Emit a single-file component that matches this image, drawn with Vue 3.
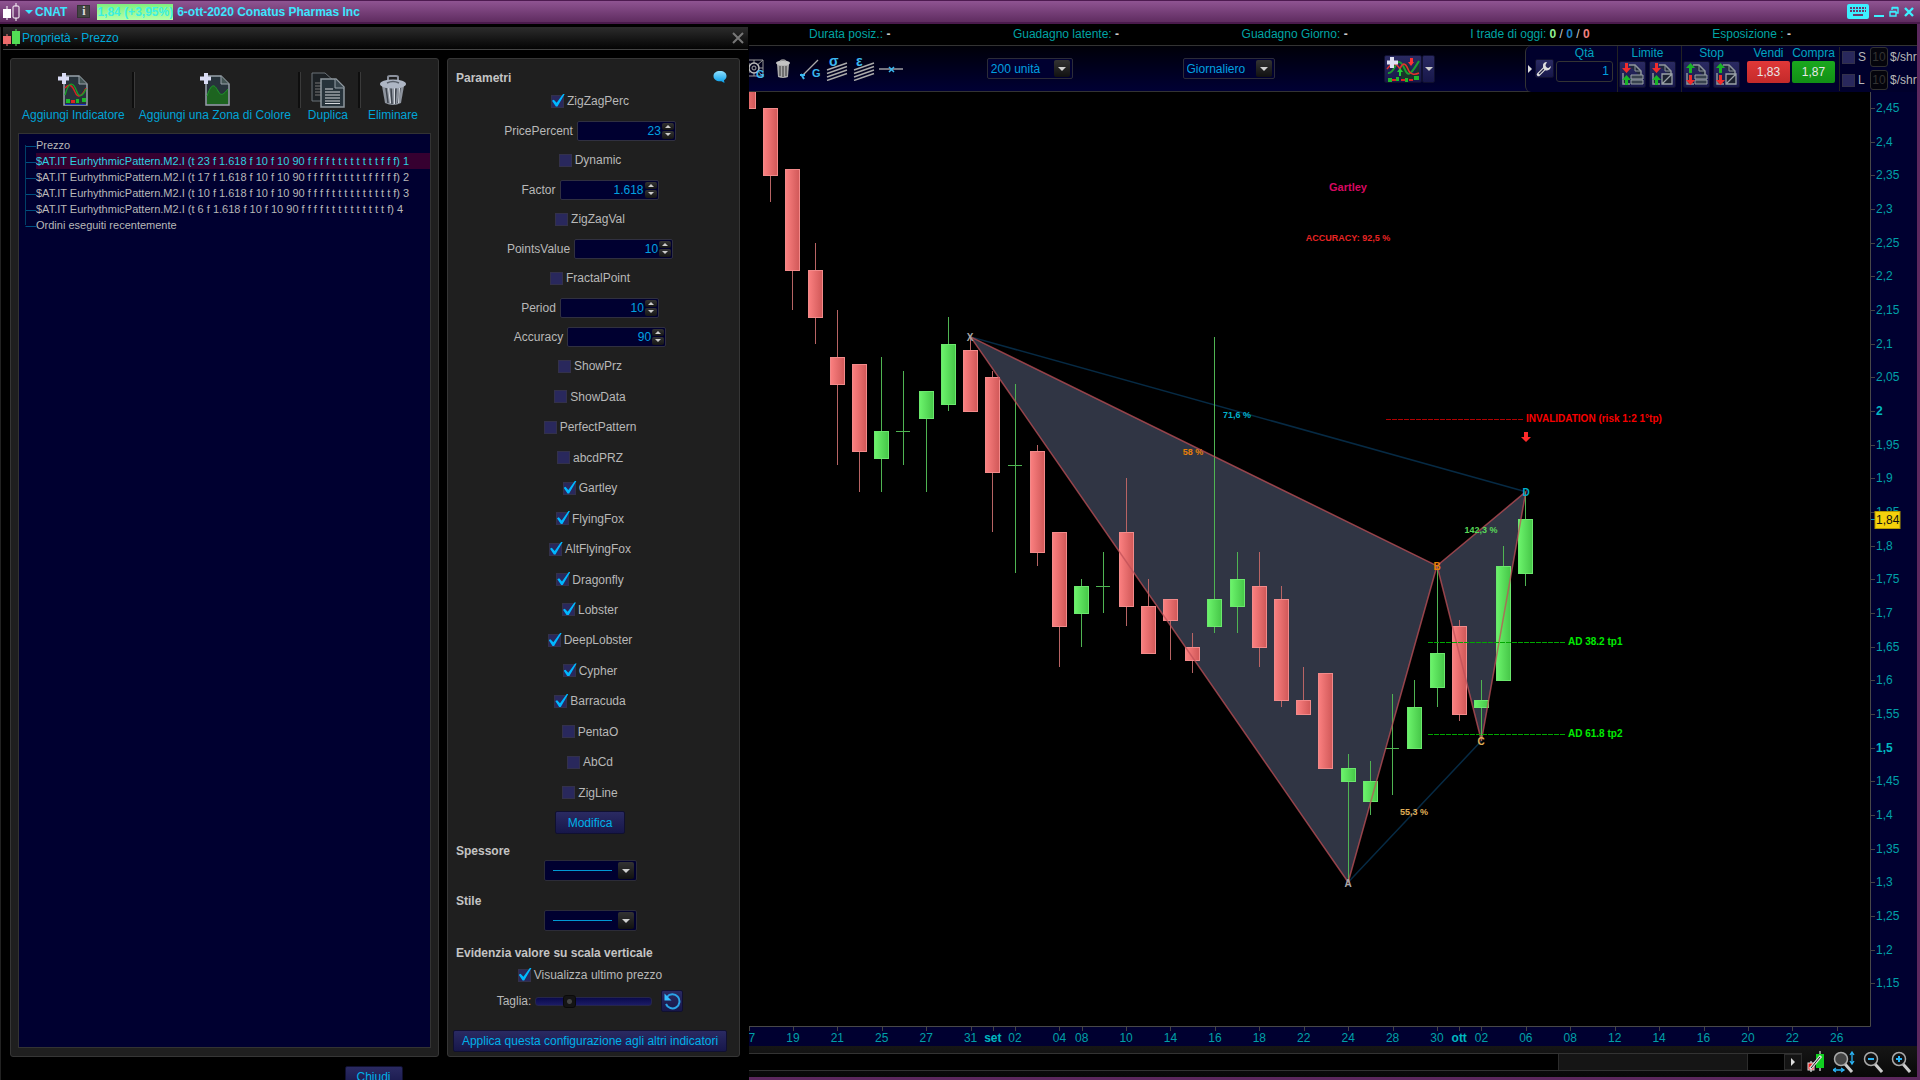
<script setup>
import { ref } from 'vue'

const tree = [
  'Prezzo',
  '$AT.IT EurhythmicPattern.M2.I (t 23 f 1.618 f 10 f 10 90 f f f f t t t t t t t t f f f) 1',
  '$AT.IT EurhythmicPattern.M2.I (t 17 f 1.618 f 10 f 10 90 f f f f t t t t t t f f f f f) 2',
  '$AT.IT EurhythmicPattern.M2.I (t 10 f 1.618 f 10 f 10 90 f f f f t t t t t t t t t t f) 3',
  '$AT.IT EurhythmicPattern.M2.I (t 6 f 1.618 f 10 f 10 90 f f f f t t t t t t t t t t f) 4',
  'Ordini eseguiti recentemente',
]
const selected = ref(1)

const params = ref([
  { name: 'ZigZagPerc', on: true },
  { name: 'PricePercent', value: '23' },
  { name: 'Dynamic', on: false },
  { name: 'Factor', value: '1.618' },
  { name: 'ZigZagVal', on: false },
  { name: 'PointsValue', value: '10' },
  { name: 'FractalPoint', on: false },
  { name: 'Period', value: '10' },
  { name: 'Accuracy', value: '90' },
])
const patterns = ref([
  ['ShowPrz', false], ['ShowData', false], ['PerfectPattern', false], ['abcdPRZ', false],
  ['Gartley', true], ['FlyingFox', true], ['AltFlyingFox', true], ['Dragonfly', true],
  ['Lobster', true], ['DeepLobster', true], ['Cypher', true], ['Barracuda', true],
  ['PentaO', false], ['AbCd', false], ['ZigLine', false],
].map(([name, on]) => ({ name, on })))
const showLast = ref(true)
const size = ref(26)

// open, high, low, close
const ohlc = [
  [2.5, 2.5, 2.36, 2.45], [2.45, 2.45, 2.31, 2.35], [2.36, 2.36, 2.15, 2.21], [2.21, 2.25, 2.1, 2.14],
  [2.08, 2.15, 1.92, 2.04], [2.07, 2.07, 1.88, 1.94], [1.93, 2.08, 1.88, 1.97], [1.97, 2.06, 1.92, 1.97],
  [1.99, 2.03, 1.88, 2.03], [2.01, 2.14, 2, 2.1], [2.09, 2.11, 2, 2], [2.05, 2.06, 1.82, 1.91],
  [1.92, 2.04, 1.76, 1.92], [1.94, 1.95, 1.77, 1.79], [1.82, 1.82, 1.62, 1.68], [1.7, 1.75, 1.65, 1.74],
  [1.74, 1.79, 1.7, 1.74], [1.82, 1.9, 1.68, 1.71], [1.71, 1.75, 1.64, 1.64], [1.72, 1.72, 1.63, 1.69],
  [1.65, 1.67, 1.61, 1.63], [1.68, 2.11, 1.67, 1.72], [1.71, 1.79, 1.67, 1.75], [1.74, 1.79, 1.62, 1.65],
  [1.72, 1.74, 1.56, 1.57], [1.57, 1.62, 1.55, 1.55], [1.61, 1.61, 1.47, 1.47], [1.45, 1.49, 1.3, 1.47],
  [1.42, 1.48, 1.4, 1.45], [1.5, 1.58, 1.43, 1.5], [1.5, 1.6, 1.5, 1.56], [1.59, 1.77, 1.56, 1.64],
  [1.68, 1.69, 1.54, 1.55], [1.56, 1.6, 1.51, 1.57], [1.6, 1.8, 1.6, 1.77], [1.76, 1.88, 1.74, 1.84],
]
const px = (i) => 22.21 * i - 0.5
const py = (p) => 16 + (2.45 - p) * 673.2
const candles = ohlc.map(([o, h, l, c], i) => ({
  x: Math.floor(px(i)),
  top: Math.round(py(Math.max(o, c))),
  bottom: Math.round(py(Math.min(o, c))) + 1,
  high: Math.round(py(h)),
  low: Math.round(py(l)),
  kind: c < o ? 'down' : 'up',
  doji: o === c,
}))
const pt = (i, p) => `${px(i)},${py(p)}`
const X = pt(10, 2.11)
const A = pt(27, 1.3)
const B = pt(31, 1.77)
const C = pt(33, 1.51)
const D = pt(35, 1.88)

const prices = Array.from({ length: 27 }, (_, k) => {
  const v = (245 - 5 * k) / 100
  return { y: py(v), text: String(v).replace('.', ','), strong: v === 2 || v === 1.5 }
})
const dates = [
  [0, '17'], [2, '19'], [4, '21'], [6, '25'], [8, '27'], [10, '31'], [11, 'set'], [12, '02'], [14, '04'],
  [15, '08'], [17, '10'], [19, '14'], [21, '16'], [23, '18'], [25, '22'], [27, '24'], [29, '28'], [31, '30'],
  [32, 'ott'], [33, '02'], [35, '06'], [37, '08'], [39, '12'], [41, '14'], [43, '16'], [45, '20'], [47, '22'], [49, '26'],
].map(([i, text]) => ({ x: px(i), text, strong: isNaN(text) }))
const notes = [
  { x: 599, y: 99, text: 'Gartley', cls: 'pink mid n11' },
  { x: 599, y: 149, text: 'ACCURACY: 92,5 %', cls: 'crimson mid n9' },
  { x: 488, y: 326, text: '71,6 %', cls: 'teal mid n9' },
  { x: 444, y: 363, text: '58 %', cls: 'orange mid n9' },
  { x: 732, y: 441, text: '142,3 %', cls: 'green mid n9' },
  { x: 665, y: 723, text: '55,3 %', cls: 'sand mid n9' },
  { x: 777, y: 330, text: 'INVALIDATION (risk 1:2 1°tp)', cls: 'red n10' },
  { x: 819, y: 553, text: 'AD 38.2 tp1', cls: 'lime n10' },
  { x: 819, y: 645, text: 'AD 61.8 tp2', cls: 'lime n10' },
  { x: 221, y: 249, text: 'X', cls: 'grey mid n10' },
  { x: 599, y: 795, text: 'A', cls: 'grey mid n10' },
  { x: 688, y: 478, text: 'B', cls: 'orange mid n10' },
  { x: 732, y: 653, text: 'C', cls: 'sand mid n10' },
  { x: 777, y: 404, text: 'D', cls: 'teal mid n10' },
]
const orders = [
  { name: 'Limite', first: 'red', second: 'green' },
  { name: 'Stop', first: 'green', second: 'red' },
]
</script>

<template>
  <div class="app">
    <header class="titlebar">
      <svg class="logo" width="18" height="18" viewBox="0 0 18 18">
        <path d="M4 3v14" stroke="#fff" /><rect y="6" width="8" height="9" fill="#fff" />
        <path d="M13 0v3m0 12v3" stroke="#fff" /><rect x="10" y="3" width="6" height="12" rx="1" fill="none" stroke="#fff" />
      </svg>
      <svg width="8" height="4" viewBox="0 0 8 4"><path d="M0 0h8L4 4z" fill="#3ce6ff" /></svg>
      <b class="ticker">CNAT</b>
      <button class="info" aria-label="Informazioni">i</button>
      <b class="quote">1,84 (+3,95%)</b>
      <b class="company">6-ott-2020 Conatus Pharmas Inc</b>
      <div class="winbtns">
        <button aria-label="Tastiera">
          <svg width="22" height="15" viewBox="0 0 22 15">
            <rect width="22" height="15" rx="2" fill="#3cf0ff" />
            <path d="M3 4h16M3 7h16" stroke="#6b3a6d" stroke-width="2" stroke-dasharray="2 1" /><path d="M6 11h10" stroke="#6b3a6d" stroke-width="2" />
          </svg>
        </button>
        <button aria-label="Riduci"><svg width="10" height="12" viewBox="0 0 10 12"><path d="M0 10h10" stroke="#3cf0ff" stroke-width="2" /></svg></button>
        <button aria-label="Ripristina">
          <svg width="10" height="12" viewBox="0 0 10 12"><path d="M3 4V2h6v5H7M3 1.5h6M1 6h6v4H1zM1 5.500h6" fill="none" stroke="#3cf0ff" stroke-width="1.400" /></svg>
        </button>
        <button aria-label="Chiudi finestra"><svg width="10" height="12" viewBox="0 0 10 12"><path d="M1 2l8 8M9 2l-8 8" stroke="#3cf0ff" stroke-width="2.400" /></svg></button>
      </div>
    </header>

    <main class="body">
      <section class="dialog">
        <div class="dlghead">
          <svg width="18" height="18" viewBox="0 0 18 18">
            <path d="M4 5v12" stroke="#f28080" /><rect y="7" width="8" height="8" fill="#ee6b6b" />
            <path d="M13 0v17" stroke="#5fe060" /><rect x="9" y="2" width="8" height="13" fill="#52dd55" />
          </svg>
          <h1>Proprietà - Prezzo</h1>
          <button class="x" aria-label="Chiudi pannello"><svg width="12" height="12" viewBox="0 0 12 12"><path d="M1 1l10 10M11 1L1 11" stroke="#777" stroke-width="2" /></svg></button>
        </div>

        <div class="panels">
          <div class="panel left">
            <div class="tools">
              <button class="tool">
                <svg width="32" height="36" viewBox="0 0 32 36">
                  <path d="M7 4h15l8 8v21H7z" fill="#27333b" stroke="#98a2aa" stroke-width="1.500" /><path d="M22 4v8h8" fill="#455" stroke="#98a2aa" />
                  <path d="M8 16c4-5 7-3 10 4s7 4 11-4" fill="none" stroke="#d22" stroke-width="1.400" /><path d="M8 23c4-14 8-14 12-3 2 6 6 4 9-3" fill="none" stroke="#18a028" stroke-width="1.400" />
                  <path d="M9 29h4m6 0h3m3-1h4" stroke="#1eb82a" stroke-width="4" /><path d="M14 29.500h4" stroke="#d22" stroke-width="3" /><path d="M8 32.500h21" stroke="#1c35c0" />
                  <path d="M7 1v11M1 6.500h11" stroke="#d9dcf4" stroke-width="4" />
                </svg>
                Aggiungi Indicatore
              </button>
              <button class="tool">
                <svg width="32" height="36" viewBox="0 0 32 36">
                  <path d="M7 4h15l8 8v21H7z" fill="#27333b" stroke="#98a2aa" stroke-width="1.500" /><path d="M22 4v8h8" fill="#455" stroke="#98a2aa" />
                  <path d="M8 24c4-12 7-13 11-5 3 6 6 3 10-2v15H8z" fill="#1d6420" /><path d="M8 24c4-12 7-13 11-5 3 6 6 3 10-2" fill="none" stroke="#1f9a2c" />
                  <path d="M7 1v11M1 6.500h11" stroke="#d9dcf4" stroke-width="4" />
                </svg>
                Aggiungi una Zona di Colore
              </button>
              <button class="tool">
                <svg width="34" height="36" viewBox="0 0 34 36">
                  <path d="M1 1h13l9 8v20H1z" fill="#1c2125" stroke="#6b7278" /><path d="M4 11h6M4 14h6M4 17h6M4 20h6M4 23h6" stroke="#777" />
                  <path d="M10 7h15l8 8v20H10z" fill="#27333b" stroke="#8f989f" stroke-width="1.500" /><path d="M24 7v9h9" fill="#37444c" stroke="#98a2aa" />
                  <path d="M14 17h8m-8 3h15m-15 3h15m-15 3h15m-15 3h15m-15 2.500h15" stroke="#d5d8dc" stroke-width="1.200" />
                </svg>
                Duplica
              </button>
              <button class="tool">
                <svg width="30" height="36" viewBox="0 0 30 36">
                  <path d="M10 8V5q0-1 2-1h6q2 0 2 1v3" fill="none" stroke="#8a909c" stroke-width="2" />
                  <path d="M4 14l3 17q8 4 16 0l3-17z" fill="#8d939d" /><path d="M8 16l2 15m3-15l1 16m4-16l-1 16m5-16l-2 15" stroke="#3d434c" stroke-width="1.500" /><path d="M10.500 16l2 15m4-15v16m5-16l-1 15" stroke="#d5d9e0" />
                  <ellipse cx="15" cy="12" rx="13" ry="4.500" fill="#aeb6c4" /><path d="M9 11q6-3 12 0" stroke="#59606b" stroke-width="1.500" fill="none" />
                </svg>
                Eliminare
              </button>
            </div>
            <ul class="tree">
              <li v-for="(t, i) in tree" :key="i" :class="{ sel: i === selected }" @click="selected = i"><span>{{ t }}</span></li>
            </ul>
          </div>

          <div class="panel right">
            <div class="phead">
              <h2>Parametri</h2>
              <svg width="14" height="14" viewBox="0 0 14 14"><defs><linearGradient id="balloon" x2="0" y2="1"><stop stop-color="#8fe0ff" /><stop offset="1" stop-color="#009be8" /></linearGradient></defs><path d="M7 1c4 0 6.500 2 6.500 5 0 2-1 3.400-2.500 4.300l.5 2.700-3-1.800C3.500 11.600.5 9.500.5 6 .5 3 3 1 7 1z" fill="url(#balloon)" /></svg>
            </div>
            <template v-for="p in params" :key="p.name">
              <div v-if="p.value" class="row spinrow">
                <label :for="p.name">{{ p.name }}</label>
                <span class="spin">
                  <input :id="p.name" v-model="p.value" type="text">
                  <span class="steps"><button aria-label="Aumenta"><i class="up"></i></button><button aria-label="Diminuisci"><i class="dn"></i></button></span>
                </span>
              </div>
              <label v-else class="row"><input v-model="p.on" type="checkbox">{{ p.name }}</label>
            </template>
            <div class="grow">
              <label v-for="p in patterns" :key="p.name" class="row"><input v-model="p.on" type="checkbox">{{ p.name }}</label>
            </div>
            <button class="btn modify">Modifica</button>
            <h2><label for="thick">Spessore</label></h2>
            <span class="drop line"><select id="thick"><option></option></select></span>
            <h2><label for="style">Stile</label></h2>
            <span class="drop line"><select id="style"><option></option></select></span>
            <h2 class="last">Evidenzia valore su scala verticale</h2>
            <label class="row short"><input v-model="showLast" type="checkbox">Visualizza ultimo prezzo</label>
            <div class="sizer">
              <label for="size">Taglia:</label>
              <input id="size" v-model="size" type="range">
              <button class="btn reset" aria-label="Ripristina taglia">
                <svg width="18" height="18" viewBox="0 0 18 18"><path d="M4 5a7 7 0 1 1-1 7" fill="none" stroke="#2ba4e8" stroke-width="2" /><path d="M1.500 1.500v7h7z" fill="#35bdff" /></svg>
              </button>
            </div>
            <button class="btn apply">Applica questa configurazione agli altri indicatori</button>
          </div>
        </div>
        <button class="btn close">Chiudi</button>
      </section>

      <section class="chartcol">
        <div class="status">
          <span>Durata posiz.: <b>-</b></span>
          <span>Guadagno latente: <b>-</b></span>
          <span>Guadagno Giorno: <b>-</b></span>
          <span>I trade di oggi: <b class="g">0</b> <em>/</em> <b class="b">0</b> <em>/</em> <b class="r">0</b></span>
          <span>Esposizione : <b>-</b></span>
        </div>

        <div class="toolbar">
          <div class="draw">
            <button class="first" aria-label="Gann">
              <svg width="16" height="22" viewBox="0 0 16 22"><path d="M-4 2h18v16H-4zM-4 2l18 16M-4 18L14 2M5 2v16M-4 10h18" fill="none" stroke="#999" /><circle cx="5" cy="10" r="5" fill="#080820" stroke="#bbb" stroke-width="1.500" /><circle cx="5" cy="10" r="2" fill="none" stroke="#aaa" /><text x="7" y="20" class="glyph">G</text></svg>
            </button>
            <button aria-label="Cestino">
              <svg width="16" height="20" viewBox="0 0 16 20"><path d="M2 5h12l-1 13q-5 2-10 0z" fill="#aaa" /><path d="M5 7v10m3-10v11m3-11v10" stroke="#333" /><ellipse cx="8" cy="4" rx="7" ry="2.500" fill="#c4c4c4" /><path d="M5 2q3-2 6 0" stroke="#999" fill="none" stroke-width="1.500" /></svg>
            </button>
            <button aria-label="Retta G">
              <svg width="22" height="22" viewBox="0 0 22 22"><path d="M3 18L19 2" stroke="#aaa" stroke-width="1.300" /><path d="M1 17h5m-4-1l3 5" stroke="#3bb8f0" stroke-width="2" /><text x="13" y="19" class="glyph">G</text></svg>
            </button>
            <button aria-label="Canale sigma">
              <svg width="22" height="24" viewBox="0 0 22 24"><path d="M1 13l20-7M1 16.500l20-7M1 20l20-7M1 23.500l20-7" stroke="#aaa" stroke-width="1.400" /><text x="3" y="9" class="glyph big">σ</text></svg>
            </button>
            <button aria-label="Canale epsilon">
              <svg width="22" height="24" viewBox="0 0 22 24"><path d="M1 13l20-7M1 16.500l20-7M1 20l20-7M1 23.500l20-7" stroke="#aaa" stroke-width="1.400" /><text x="3" y="9" class="glyph big">ε</text></svg>
            </button>
            <button aria-label="Linea orizzontale">
              <svg width="24" height="10" viewBox="0 0 24 10"><path d="M0 5h24" stroke="#b5b5b5" stroke-width="1.300" /><path d="M10 3l5 5m0-5l-5 5" stroke="#3bb8f0" stroke-width="1.500" /></svg>
            </button>
          </div>
          <i class="sp s1"></i>
          <span class="drop units"><select aria-label="Numero di unità"><option>200 unità</option></select></span>
          <i class="sp s2"></i>
          <span class="drop frame"><select aria-label="Intervallo"><option>Giornaliero</option></select></span>
          <i class="sp s2"></i>
          <div class="addind">
            <button class="btn" aria-label="Aggiungi indicatore">
              <svg width="36" height="26" viewBox="0 0 36 26">
                <path d="M16 12c4-10 8-3 10 3s4 3 8-9v18H16z" fill="#173c20" opacity=".8" />
                <path d="M3 17c6 1 7-11 11-11s5 8 8 11 7-4 12-12" fill="none" stroke="#1b9c30" stroke-width="2" /><path d="M2 13c6-8 9-6 13 0 2-6 5-7 8 0 2 6 7 6 11 4" fill="none" stroke="#e03030" stroke-width="1.600" />
                <path d="M3 24h4m4-1h3m6 1h3m6-2h5" stroke="#1eb82a" stroke-width="4" /><path d="M7 24h4m5 0h4m4 0h4" stroke="#d22" stroke-width="2" />
                <path d="M14 20v-4h-2l3-4 3 4h-2v4z" fill="#22cc33" /><path d="M25 2v4h-2l3 4 3-4h-1V2z" fill="#f33" />
                <path d="M7 1v11M2 6.500h11" stroke="#dfe0f4" stroke-width="4" />
              </svg>
            </button>
            <button class="btn more" aria-label="Altri indicatori"><i class="dn big-dn"></i></button>
          </div>
          <i class="sp s3"></i>

          <div class="trade">
            <i class="rt"></i>
            <button class="btn wrench" aria-label="Impostazioni ordine"><svg width="16" height="16" viewBox="0 0 16 16"><path d="M2.500 13.500L9 7" stroke="#ddd" stroke-width="3.500" stroke-linecap="round" /><path d="M3 13l6-6" stroke="#222244" stroke-width="1.200" /><path d="M11 1Q6.500 1 7 5.500T11 9.500 15 5l-2.500 2-2.500-.5L9.500 4z" fill="#ddd" /></svg></button>
            <div class="tcol qty"><label for="qty">Qtà</label><input id="qty" type="text" value="1"></div>
            <div v-for="o in orders" :key="o.name" class="tcol order">
              <span>{{ o.name }}</span>
              <div>
                <button v-for="n in 2" :key="n" class="btn" :aria-label="o.name + ' ' + n">
                  <svg width="24" height="24" viewBox="0 0 24 24">
                    <path d="M9 3h6l6 6v6M3 11v11h7" fill="#20283a" stroke="#8e959c" stroke-width="1.500" /><path d="M15 3v6h6" fill="none" stroke="#8e959c" />
                    <g v-if="n === 1"><path d="M11 13h12v4H11zM11 18h12v4H11z" fill="#38424f" stroke="#9aa2a8" /></g>
                    <path v-else d="M12 12h10v10H12zM12 22l10-10" fill="#1c2230" stroke="#9aa2a8" stroke-width="1.300" />
                    <path :class="o.first" :d="o.first === 'red' ? 'M5 1h3v5h3L6.500 11 2 6h3z' : 'M5 11h3V6h3L6.500 1 2 6h3z'" />
                    <path :class="o.second" :d="o.second === 'red' ? 'M5 13h3v5h3l-4.500 5L2 18h3z' : 'M5 23h3v-5h3l-4.500-5L2 18h3z'" />
                  </svg>
                </button>
              </div>
            </div>
            <div class="tcol px"><span>Vendi</span><button class="sell">1,83</button></div>
            <div class="tcol px"><span>Compra</span><button class="buy">1,87</button></div>
            <div class="risk">
              <div v-for="s in ['S', 'L']" :key="s"><label><input type="checkbox">{{ s }}</label><input type="text" value="10" :aria-label="s + ' $/shr'"><span>$/shr</span></div>
            </div>
          </div>
        </div>

        <svg class="chart" viewBox="0 0 1168 954">
          <defs>
            <linearGradient id="down"><stop stop-color="#fb8080" /><stop offset="1" stop-color="#d05858" /></linearGradient>
            <linearGradient id="up"><stop stop-color="#6cf46c" /><stop offset="1" stop-color="#46c648" /></linearGradient>
          </defs>
          <path :d="`M${X}L${A}L${B}ZM${B}L${C}L${D}Z`" fill="#303544" />
          <path :d="`M${X}L${D}M${A}L${C}`" class="ratio" />
          <g v-for="(c, i) in candles" :key="i" :class="c.kind">
            <path :d="`M${c.x + 0.5} ${c.high}V${c.low}`" class="wick" />
            <path v-if="c.doji" :d="`M${c.x - 7} ${c.top + 0.5}h14`" class="wick" />
            <rect v-else :x="c.x - 6.5" :y="c.top + 0.5" width="14" :height="Math.max(c.bottom - c.top - 1, 1)" class="bar" />
          </g>
          <path :d="`M${X}L${A}L${B}ZM${B}L${C}L${D}Z`" class="edge" />
          <path d="M637 327.500h137" class="dash inval" />
          <path d="M679 550.500h137M679 642.500h137" class="dash tp" />
          <path d="M775 340h4v5h3l-5 5-5-5h3z" fill="#ff2a2a" />
          <text v-for="(n, i) in notes" :key="i" :x="n.x" :y="n.y" :class="n.cls">{{ n.text }}</text>
          <rect x="1122" width="46" height="954" fill="#000030" />
          <rect y="935" width="1168" height="19" fill="#000030" />
          <path d="M0 934.500h1121.500V0" fill="none" stroke="#484848" />
          <g class="axis">
            <template v-for="p in prices" :key="p.text">
              <path :d="`M1122 ${Math.round(p.y) + 0.5}h4`" stroke="#444" />
              <text x="1127" :y="p.y + 4" :class="{ strong: p.strong }">{{ p.text }}</text>
            </template>
            <template v-for="d in dates" :key="d.x">
              <path :d="`M${Math.round(d.x) + 0.5} 935v4`" stroke="#444" />
              <text :x="d.x" y="950" class="mid" :class="{ strong: d.strong }">{{ d.text }}</text>
            </template>
          </g>
          <path d="M1122 427.500h4" stroke="#00a0d0" />
          <rect x="1126" y="419.500" width="25" height="17" fill="#f4d20c" stroke="#b39a00" />
          <text x="1127" y="432" class="now">1,84</text>
        </svg>

        <div class="scroll">
          <div class="track"><i class="thumb"></i><button aria-label="Avanti"><i class="rt"></i></button></div>
          <button aria-label="Impostazioni candele">
            <svg width="18" height="22" viewBox="0 0 18 22"><path d="M4 10v11M13 0v20" stroke="#bbb" stroke-width="1.500" /><rect x="1" y="12" width="6" height="7" fill="#e22" stroke="#ddd" /><rect x="9" y="3" width="8" height="14" fill="#10d020" /><path d="M3 18L14 5" stroke="#ddd" stroke-width="3" /><path d="M4 17L13 6" stroke="#222" /></svg>
          </button>
          <button aria-label="Adatta zoom">
            <svg width="22" height="22" viewBox="0 0 22 22"><path d="M12 13l7 8" stroke="#ccc" stroke-width="3" /><circle cx="8" cy="8" r="6.500" fill="#444" stroke="#aaa" stroke-width="1.500" /><path d="M19 2v10m-2-8l2-3 2 3m-4 6l2 3 2-3M1 19h9M3 17l-3 2 3 2m5-4l3 2-3 2" stroke="#2ab4f5" stroke-width="1.300" fill="none" /></svg>
          </button>
          <button aria-label="Riduci zoom">
            <svg width="20" height="22" viewBox="0 0 20 22"><path d="M12 13l7 8" stroke="#ccc" stroke-width="3" /><circle cx="8" cy="8" r="6.500" fill="#111" stroke="#aaa" stroke-width="1.500" /><path d="M5 8h6" stroke="#2ab4f5" stroke-width="2" /></svg>
          </button>
          <button aria-label="Aumenta zoom">
            <svg width="20" height="22" viewBox="0 0 20 22"><path d="M12 13l7 8" stroke="#ccc" stroke-width="3" /><circle cx="8" cy="8" r="6.500" fill="#111" stroke="#aaa" stroke-width="1.500" /><path d="M5 8h6M8 5v6" stroke="#2ab4f5" stroke-width="2" /></svg>
          </button>
        </div>
      </section>
    </main>
  </div>
</template>

<style>
html, body { background: #000; }
body { margin: 0; }
</style>

<style scoped>
* { box-sizing: border-box; }
.app { height: 100vh; overflow: hidden; display: flex; flex-direction: column; background: #000; font: 12px/16px "Liberation Sans", Arial, sans-serif; color: #b8b8b8; }
button, input, select { font: inherit; color: inherit; background: none; border: 0; padding: 0; margin: 0; border-radius: 0; outline: 0; }
button { cursor: pointer; display: inline-flex; align-items: center; justify-content: center; }
svg { display: block; }
h1, h2 { margin: 0; font-size: 12px; line-height: 16px; }
i { font-style: normal; display: block; }

.titlebar { flex: none; height: 24px; display: flex; align-items: center; padding: 0 6px 0 3px; background: linear-gradient(#8f5492, #5f2c60); border-top: 1px solid #4d1a50; border-bottom: 2px solid #4a1a4c; color: #3ce6ff; }
.titlebar .logo { margin-right: 4px; }
.ticker { margin-left: 2px; }
.info { width: 13px; height: 13px; margin: 0 7px 0 10px; background: #444; border: 1px solid #333; color: #ddd; font-family: "Liberation Serif", serif; font-weight: bold; line-height: 11px; }
.quote { background: linear-gradient(#7fef7f, #b4ffa8); color: #3cf0e0; margin-right: 4px; }
.winbtns { margin-left: auto; display: flex; gap: 5px; align-items: center; }

.body { flex: 1; min-height: 0; display: flex; }
.dialog { flex: none; width: 748px; margin-top: 3px; padding-left: 2px; display: flex; flex-direction: column; align-items: stretch; border-left: 1px solid #222; }
.dlghead { flex: none; height: 23px; display: flex; align-items: center; gap: 1px; padding-right: 4px; background: linear-gradient(#2c2c2c, #040404); border-bottom: 1px solid #444; }
.dlghead h1 { color: #00a8d8; font-weight: normal; }
.x { margin-left: auto; }
.panels { flex: none; height: calc(100vh - 73px); padding: 8px 8px 0 7px; display: flex; gap: 8px; }
.panel { background: #1f1f1f; border: 1px solid #363636; border-radius: 3px; display: flex; flex-direction: column; }
.left { width: 430px; padding: 13px 7px 8px; }
.tools { display: flex; height: 61px; flex: none; }
.tool { flex-direction: column; justify-content: flex-start; color: #00a4d8; padding: 0 10px; position: relative; white-space: nowrap; }
.tool:first-child { padding: 0 7px 0 4px; }
.tool:nth-child(2) { padding: 0 7px; }
.tool svg { margin-bottom: -1px; }
.tool + .tool::before { content: ""; position: absolute; left: 0; top: 0; width: 2px; height: 36px; background: #0e0e0e; border-right: 1px solid #3a3a3a; }
.tree { flex: 1; margin: 0; padding: 3px 0 0 6px; list-style: none; background: #000030; border: 1px solid #333; font-size: 11px; }
.tree li { height: 16px; display: flex; white-space: nowrap; color: #b8b8b8; position: relative; }
.tree li::before { content: ""; flex: none; width: 10px; height: 9px; border-bottom: 1px solid #005080; border-left: 1px solid transparent; }
.tree li::after { content: ""; position: absolute; left: 0; top: -8px; height: 16px; border-left: 1px solid #004068; }
.tree li:first-child::after { display: none; }
.tree span { flex: 1; }
.tree .sel span { background: #360030; color: #2cd0e0; }

.right { flex: 1; padding: 11px 12px 4px 5px; align-items: center; }
.right h2 { align-self: flex-start; margin-left: 3px; color: #c4c4c4; }
.phead { align-self: stretch; display: flex; justify-content: space-between; height: 16px; flex: none; margin-right: -6px; padding-right: 6px; }
.row { display: flex; align-items: center; justify-content: center; height: 30px; gap: 3px; flex: none; }
.spinrow { height: 29px; gap: 4px; }
.grow { flex: 1; display: flex; flex-direction: column; }
.grow .row { flex: 1; height: auto; }
input[type="checkbox"] { appearance: none; width: 13px; height: 13px; flex: none; background: #29285c; border: 1px solid #33314a; position: relative; }
input[type="checkbox"]:checked::after { content: ""; position: absolute; left: 0; top: -2px; width: 13px; height: 13px; background: #00b8ff; clip-path: polygon(0 55%, 14% 48%, 36% 72%, 88% 0, 100% 0, 42% 100%, 30% 100%); }
.spin { display: flex; width: 99px; height: 20px; background: #000030; border: 1px solid #303040; border-radius: 2px; padding-right: 1px; }
.spin input { flex: 1; width: 0; text-align: right; color: #00a0e0; padding-right: 1px; }
.steps { display: flex; flex-direction: column; gap: 1px; padding: 1px 0; }
.steps button { width: 12px; height: 8px; background: linear-gradient(#333, #151515); border-radius: 2px; }
.up { border: 3px solid transparent; border-top: 0; border-bottom-color: #ccc; }
.dn { border: 3px solid transparent; border-bottom: 0; border-top-color: #ccc; }
.big-dn { border-width: 4px; border-bottom: 0; }
.btn { background: linear-gradient(#2a2a62, #17174a); border: 1px solid #101030; border-radius: 2px; color: #00b0e8; flex: none; }
.modify { width: 70px; height: 23px; margin: 3px 0 9px; }
.drop { position: relative; display: flex; height: 21px; background: #000030; border: 1px solid #2c2c38; border-radius: 2px; flex: none; }
.drop select { appearance: none; width: 100%; padding: 0 20px 0 3px; color: #00a0e0; }
.drop::after { content: ""; position: absolute; right: 2px; top: 1px; width: 16px; height: 17px; pointer-events: none; border-radius: 2px; background: linear-gradient(#333, #111); }
.drop::before { content: ""; position: absolute; z-index: 1; right: 6px; top: 8px; pointer-events: none; border: 4px solid transparent; border-bottom: 0; border-top-color: #d0d0d0; }
.line { width: 93px; margin: 1px 0 12px; }
.line select { background: linear-gradient(#0098d4, #0098d4) 8px 9px / 59px 1px no-repeat; }
.last { margin-top: 2px; }
.short { height: 28px; }
.sizer { display: flex; align-items: center; gap: 4px; height: 24px; margin-bottom: 17px; flex: none; }
input[type="range"] { appearance: none; width: 117px; height: 9px; background: linear-gradient(#0a0a4c, #1c1c66); border: 1px solid #26264a; border-radius: 3px; }
input[type="range"]::-webkit-slider-thumb { appearance: none; width: 13px; height: 13px; border-radius: 3px; background: radial-gradient(#444 2px, #141414 3px); border: 1px solid #0a0a0a; }
.reset { width: 22px; height: 22px; margin-left: 5px; }
.apply { width: 274px; height: 22px; }
.close { align-self: center; width: 58px; height: 22px; margin: 9px 4px 0 0; }

.chartcol { flex: 1; min-width: 0; display: flex; flex-direction: column; margin-left: 1px; border-right: 3px solid #5c285e; border-bottom: 3px solid #5c285e; background: #101010; }
.status { flex: none; display: flex; justify-content: space-between; height: 22px; padding: 2px 126px 0 60px; background: #000; border-bottom: 1px solid #333; color: #00a4a4; white-space: nowrap; }
.status b { color: #ccc; }
.status em { font-style: normal; color: #ccc; }
.status .g { color: #90f090; }
.status .b { color: #2080c0; }
.status .r { color: #f08080; }
.toolbar { flex: none; display: flex; align-items: center; height: 46px; padding-bottom: 0; background: linear-gradient(#000008, #000034); border-bottom: 1px solid #333; }
.draw { display: flex; height: 24px; align-items: center; flex: none; }
.draw button { width: 27px; height: 24px; }
.draw .first { width: 16px; margin-right: 4px; }
.glyph { font: bold 11px "Liberation Sans", Arial, sans-serif; fill: #3bb8f0; }
.draw .big { font-size: 14px; }
.sp { flex: 83 0 0; }
.s2 { flex-grow: 110; }
.s3 { flex-grow: 90; }
.units { width: 86px; }
.frame { width: 92px; }
.addind { display: flex; }
.addind .btn { height: 28px; }
.more { width: 13px; }
.trade { flex: none; width: 392px; height: 46px; display: flex; align-items: center; background: #00002c; border-left: 1px solid #333; border-radius: 6px 0 0 6px; padding-left: 2px; }
.rt { border: 4px solid transparent; border-right: 0; border-left-color: #ddd; }
.trade .wrench { width: 19px; height: 19px; margin: 0 2px 0 3px; }
.tcol { display: flex; flex-direction: column; align-items: center; gap: 0; align-self: stretch; color: #00a4c0; }
.tcol > span, .tcol > label { height: 15px; line-height: 15px; }
.qty input { width: 57px; height: 21px; border: 1px solid #333; border-radius: 3px; text-align: right; padding-right: 3px; color: #00a0e0; }
.qty { padding-right: 4px; }
.order { border-left: 1px solid #222; padding: 0 5px 0 1px; width: 64px; }
.order div { display: flex; gap: 3px; }
.order .btn { width: 27px; height: 27px; }
.red { fill: #f02c2c; }
.green { fill: #18b428; }
.px { width: 43px; margin-right: 2px; }
.order + .px { margin-left: 2px; }
.sell, .buy { width: 43px; height: 22px; border-radius: 2px; color: #e8e8e8; background: linear-gradient(#e03838, #c42a2a); }
.buy { background: linear-gradient(#1aa81e, #119015); }
.risk { display: flex; flex-direction: column; gap: 2px; border-left: 1px solid #222; margin-left: 2px; padding-left: 2px; }
.risk div { display: flex; align-items: center; height: 21px; gap: 2px; }
.risk label { display: flex; gap: 3px; align-items: center; width: 26px; }
.risk input[type="text"] { width: 18px; height: 20px; border: 1px solid #303030; border-radius: 3px; color: #333; background: #04040c; text-align: center; }

.chart { width: 100%; height: auto; flex: none; background: #000; font-size: 12px; }
.ratio { fill: none; stroke: #062a44; stroke-width: 1.5; }
.down .wick { stroke: #b86464; }
.up .wick { stroke: #4fb452; }
.down .bar { fill: url(#down); stroke: #f28a8a; }
.up .bar { fill: url(#up); stroke: #6be86d; }
.edge { fill: none; stroke: #c05058; stroke-opacity: 0.75; stroke-width: 1.5; }
.dash { stroke-dasharray: 5 1; }
.inval { stroke: #b00000; }
.tp { stroke: #00a800; }
.chart text { font-weight: bold; }
.chart .n9 { font-size: 9px; }
.chart .n10 { font-size: 10px; }
.chart .n11 { font-size: 11px; }
.mid { text-anchor: middle; }
.chart .pink { fill: #d80860; }
.chart .crimson { fill: #e82424; }
.chart .teal { fill: #00b0cc; }
.chart .orange { fill: #e88008; }
.chart text.green { fill: #58d858; }
.chart .sand { fill: #e0b058; }
.chart text.red { fill: #f80000; }
.chart .lime { fill: #00ec00; }
.chart .grey { fill: #a8a8a8; }
.chart .axis text { fill: #00a0a8; font-weight: normal; }
.chart .axis .strong { fill: #00b8c0; font-weight: bold; }
.chart .axis + path + rect + .now { font-weight: normal; fill: #111; }

.scroll { flex: 1; min-height: 30px; display: flex; align-items: center; gap: 8px; padding-right: 6px; background: linear-gradient(#161616, #080808); }
.track { flex: 1; height: 18px; display: flex; background: #000; border: solid #333; border-width: 1px 0; margin-right: -3px; }
.thumb { width: 190px; margin: 0 36px 0 auto; background: radial-gradient(#444 3px, #151515 4px); border: solid #2c2c2c; border-width: 0 1px; }
.track button { width: 18px; border: 1px solid #2c2c2c; background: #141414; }
</style>
